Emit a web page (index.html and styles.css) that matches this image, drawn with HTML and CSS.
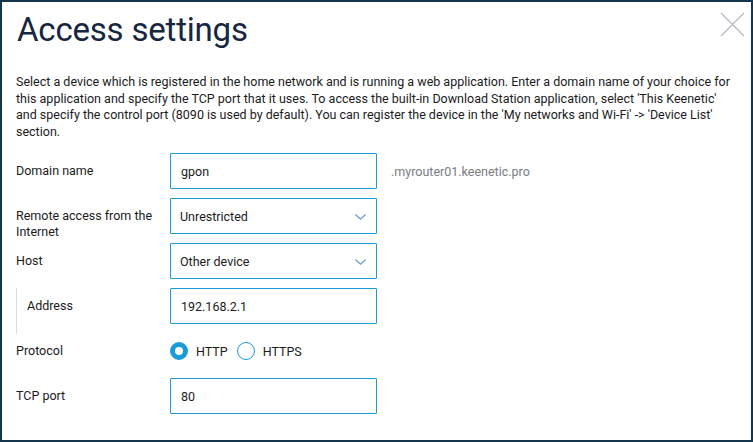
FILE: index.html
```html
<!DOCTYPE html>
<html lang="en">
<head>
    <meta charset="UTF-8">
    <meta name="viewport" content="width=device-width, initial-scale=1.0">
    <title>Access settings</title>
    <link rel="stylesheet" href="styles.css">
</head>
<body>
<div class="dialog">
    <div class="dialog-header">
        <h1>Access settings</h1>
        <button class="close-button" aria-label="Close">
            <svg width="25" height="25" viewBox="0 0 25 25">
                <path d="M1 1 L24 24 M24 1 L1 24" stroke="#b4b9c1" stroke-width="1.2" fill="none"/>
            </svg>
        </button>
    </div>

    <p class="description">Select a device which is registered in the home network and is running a web application. Enter a domain name of your choice for this application and specify the TCP port that it uses. To access the built-in Download Station application, select 'This Keenetic' and specify the control port (8090 is used by default). You can register the device in the 'My networks and Wi-Fi' -&gt; 'Device List' section.</p>

    <div class="form">
        <div class="form-row">
            <label class="form-label" for="domainName">Domain name</label>
            <input type="text" id="domainName" class="form-input" value="gpon">
            <span class="domain-suffix">.myrouter01.keenetic.pro</span>
        </div>

        <div class="form-row">
            <label class="form-label" for="remoteAccess">Remote access from the Internet</label>
            <div class="form-select" id="remoteAccess">
                <span>Unrestricted</span>
                <svg class="chevron" width="11" height="6" viewBox="0 0 11 6">
                    <path d="M0.5 0.5 L5.5 5.2 L10.5 0.5" stroke="#6a98d4" stroke-width="1.2" fill="none"/>
                </svg>
            </div>
        </div>

        <div class="form-row">
            <label class="form-label" for="host">Host</label>
            <div class="form-select" id="host">
                <span>Other device</span>
                <svg class="chevron" width="11" height="6" viewBox="0 0 11 6">
                    <path d="M0.5 0.5 L5.5 5.2 L10.5 0.5" stroke="#6a98d4" stroke-width="1.2" fill="none"/>
                </svg>
            </div>
        </div>

        <div class="form-row form-row-nested">
            <label class="form-label" for="address">Address</label>
            <input type="text" id="address" class="form-input" value="192.168.2.1">
        </div>

        <div class="form-row">
            <span class="form-label">Protocol</span>
            <div class="radio-group">
                <label class="radio-option">
                    <span class="radio radio-checked"></span>
                    HTTP
                </label>
                <label class="radio-option">
                    <span class="radio"></span>
                    HTTPS
                </label>
            </div>
        </div>

        <div class="form-row">
            <label class="form-label" for="tcpPort">TCP port</label>
            <input type="text" id="tcpPort" class="form-input" value="80">
        </div>
    </div>
</div>
</body>
</html>
```

FILE: styles.css
```css
html, body {
    margin: 0;
    padding: 0;
}

body {
    background-color: #ffffff;
    color: #1b1b1b;
    font-family: Roboto, "Liberation Sans", sans-serif;
    font-size: 12.5px;
}

.dialog {
    box-sizing: border-box;
    width: 753px;
    height: 442px;
    border: 2px solid #15354d;
    padding: 0 14px;
    overflow: hidden;
}

.dialog-header {
    display: flex;
    justify-content: space-between;
    align-items: flex-start;
}

h1 {
    margin: 8px 0 0 1px;
    font-size: 33px;
    font-weight: 400;
    line-height: 40px;
    letter-spacing: -0.2px;
    color: #17263f;
}

.close-button {
    background: none;
    border: none;
    padding: 0;
    margin: 10px -8px 0 0;
    cursor: pointer;
    line-height: 0;
}

.description {
    margin: 24px 0 0 0;
    line-height: 16.5px;
    color: #1b1b1b;
}

.form {
    margin-top: 13px;
    display: flex;
    flex-direction: column;
    gap: 9px;
}

.form-row {
    display: flex;
    align-items: center;
    height: 36px;
}

.form-label {
    box-sizing: border-box;
    width: 154px;
    flex-shrink: 0;
    align-self: flex-start;
    padding-top: 10px;
    padding-right: 4px;
    line-height: 16px;
}

.form-row-nested .form-label {
    height: 46px;
    padding-left: 10px;
    border-left: 1px solid #d6dbe1;
}

.form-input, .form-select {
    box-sizing: border-box;
    width: 207px;
    height: 36px;
    border: 1px solid #1b9ad9;
    border-radius: 1px;
    padding: 0 10px;
    font-family: inherit;
    font-size: 12.5px;
    color: #1b1b1b;
    background-color: #ffffff;
    outline: none;
}

.form-select {
    display: flex;
    align-items: center;
    justify-content: space-between;
    padding: 0 10px 0 9px;
}

.form-select .chevron {
    margin-top: 1px;
}

.domain-suffix {
    margin-left: 14px;
    color: #7a7d82;
}

.radio-group {
    display: flex;
    align-items: center;
    gap: 9px;
}

.radio-option {
    display: flex;
    align-items: center;
    gap: 8px;
}

.radio {
    box-sizing: border-box;
    width: 18px;
    height: 18px;
    border-radius: 50%;
    border: 1.5px solid #1b9ad9;
}

.radio-checked {
    border: 5px solid #1b9ad9;
}
```
